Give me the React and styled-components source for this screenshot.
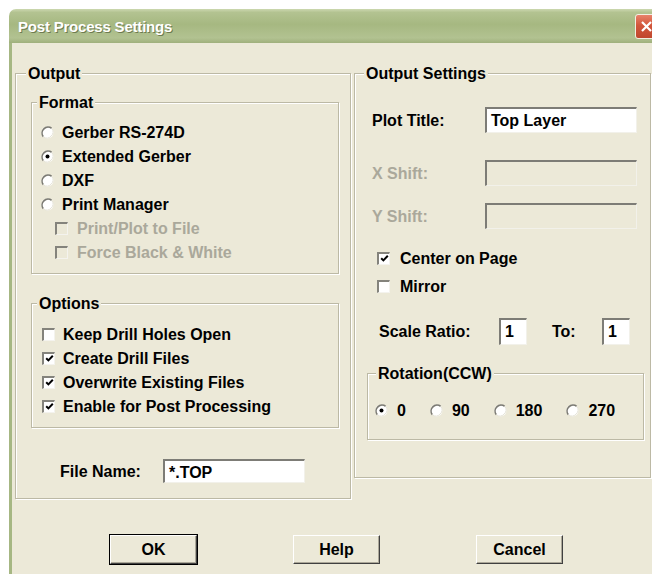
import React from 'react';
import styled, { createGlobalStyle } from 'styled-components';

const GlobalStyle = createGlobalStyle`
  html, body {
    margin: 0;
    padding: 0;
    background: #ffffff;
    overflow: hidden;
  }
  body {
    font-family: "Liberation Sans", Arial, sans-serif;
  }
`;

const Window = styled.div`
  margin: 9px 0 0 9px;
  width: 660px;
  height: calc(100vh - 9px);
  border-radius: 7px 7px 0 0;
  overflow: hidden;
  display: flex;
  flex-direction: column;
`;

const TitleBar = styled.div`
  flex: none;
  height: 34px;
  display: flex;
  align-items: center;
  justify-content: space-between;
  padding: 0 11px 0 9px;
  background: linear-gradient(
    to bottom,
    #ccd8b0 0%,
    #b3c391 10%,
    #a6b881 45%,
    #b2c291 85%,
    #9fb07c 100%
  );
`;

const Title = styled.span`
  font: bold 15px/17px "Liberation Sans", Arial, sans-serif;
  letter-spacing: -0.2px;
  color: #ffffff;
  text-shadow: 1px 1px 0 #6d7b50;
`;

const CloseButton = styled.div`
  width: 21px;
  height: 23px;
  border: 1px solid #f2efe2;
  border-radius: 3px;
  background: linear-gradient(to bottom, #e8826a, #d2563b 45%, #c0472e);
  display: flex;
  align-items: center;
  justify-content: center;
`;

const Body = styled.div`
  flex: 1;
  background: #ece9d8;
  border-left: 3px solid #a6b783;
  padding: 22px 0 0 3px;
`;

const Columns = styled.div`
  display: flex;
  align-items: flex-start;
  gap: 3px;
`;

const Group = styled.fieldset`
  margin: ${p => p.$top || 0}px 0 0 0;
  min-width: 0;
  width: ${p => (p.$w ? `${p.$w}px` : 'auto')};
  box-sizing: border-box;
  padding: ${p => p.$pad};
  border: 1px solid #bcb9a5;
  box-shadow: inset 1px 1px 0 #ffffff, 1px 1px 0 #ffffff;
`;

const Legend = styled.legend`
  margin-left: ${p => p.$indent}px;
  padding: 0 2px;
  background: #ece9d8;
  font: bold 16px/17px "Liberation Sans", Arial, sans-serif;
  color: #000;
`;

const Option = styled.div`
  display: flex;
  align-items: center;
  height: ${p => p.$h || 24}px;
  margin-top: ${p => p.$top || 0}px;
  padding-left: ${p => p.$indent || 0}px;
  gap: ${p => p.$gap}px;
  font: bold 16px/17px "Liberation Sans", Arial, sans-serif;
  color: ${p => (p.$disabled ? '#aaa89b' : '#000')};
  white-space: nowrap;
`;

const Box = styled.span`
  flex: none;
  width: 13px;
  height: 13px;
  box-sizing: border-box;
  border-style: solid;
  border-width: 2px 1px 1px 2px;
  border-color: #84837c #f4f3ee #f4f3ee #84837c;
  background: ${p => (p.$disabled ? '#ece9d8' : '#ffffff')};
  display: flex;
  align-items: center;
  justify-content: center;
`;

const FieldRow = styled.div`
  display: flex;
  align-items: center;
  margin-top: ${p => p.$top || 0}px;
  padding-left: ${p => p.$indent || 0}px;
  font: bold 16px/17px "Liberation Sans", Arial, sans-serif;
  color: ${p => (p.$disabled ? '#aaa89b' : '#000')};
`;

const FieldLabel = styled.span`
  flex: none;
  width: ${p => p.$w}px;
  margin-left: ${p => p.$left || 0}px;
  white-space: nowrap;
`;

const TextBox = styled.div`
  flex: none;
  width: ${p => p.$w}px;
  height: ${p => p.$h || 26}px;
  box-sizing: border-box;
  border-style: solid;
  border-width: 2px 1px 1px 2px;
  border-color: #7d7c76 #f2f1ea #f2f1ea #7d7c76;
  background: ${p => (p.$disabled ? '#ece9d8' : '#ffffff')};
  padding: 2px 0 0 4px;
  font: bold 16px/19px "Liberation Sans", Arial, sans-serif;
  color: #000;
  white-space: nowrap;
  overflow: hidden;
`;

const RadioRow = styled.div`
  display: flex;
  gap: 24px;
`;

const ButtonRow = styled.div`
  display: flex;
  gap: 96px;
  margin-top: 36px;
  padding-left: 95px;
`;

const Button = styled.div`
  width: 87px;
  height: 29px;
  box-sizing: border-box;
  display: flex;
  align-items: center;
  justify-content: center;
  font: bold 16px/17px "Liberation Sans", Arial, sans-serif;
  color: #000;
  background: #ece9d8;
  border-style: solid;
  border-width: 1px;
  border-color: #ffffff #404040 #404040 #ffffff;
  box-shadow: inset -1px -1px 0 #aca899;
  outline: ${p => (p.$default ? '1px solid #000' : 'none')};
`;

// classic round option button: dark upper-left rim, light lower-right rim
const Radio = ({ checked }) => (
  <svg width="13" height="13" viewBox="0 0 13 13" style={{ flex: 'none' }}>
    <circle cx="6.5" cy="6.5" r="6" fill="#ffffff" />
    <path d="M10.7 2.3 A6 6 0 0 0 2.3 10.7" fill="none" stroke="#7c7b74" strokeWidth="1.6" />
    <path d="M10.7 2.3 A6 6 0 0 1 2.3 10.7" fill="none" stroke="#e4e2d6" strokeWidth="1" />
    {checked && <circle cx="6.5" cy="6.5" r="2" fill="#000" />}
  </svg>
);

const Check = ({ checked, disabled }) => (
  <Box $disabled={disabled}>
    {checked && (
      <svg width="9" height="9" viewBox="0 0 9 9">
        <path d="M1.2 4.2 L3.4 6.4 L7.8 1.8" fill="none" stroke="#000" strokeWidth="2" />
      </svg>
    )}
  </Box>
);

const RadioOption = ({ label, checked, indent, gap = 8 }) => (
  <Option $indent={indent} $gap={gap}>
    <Radio checked={checked} />
    {label}
  </Option>
);

const CheckOption = ({ label, checked, disabled, indent, gap = 8, top, h }) => (
  <Option $indent={indent} $gap={gap} $disabled={disabled} $top={top} $h={h}>
    <Check checked={checked} disabled={disabled} />
    {label}
  </Option>
);

export default function App() {
  return (
    <>
      <GlobalStyle />
      <Window>
        <TitleBar>
          <Title>Post Process Settings</Title>
          <CloseButton>
            <svg width="13" height="13" viewBox="0 0 13 13">
              <path d="M2 2 L11 11 M11 2 L2 11" stroke="#ffffff" strokeWidth="2.2" />
            </svg>
          </CloseButton>
        </TitleBar>

        <Body>
          <Columns>
            <Group $w={336} $pad="12px 11px 15px 15px">
              <Legend $indent={-5}>Output</Legend>

              <Group $pad="9px 0 9px 9px">
                <Legend $indent={-4}>Format</Legend>
                <RadioOption label="Gerber RS-274D" />
                <RadioOption label="Extended Gerber" checked />
                <RadioOption label="DXF" />
                <RadioOption label="Print Manager" />
                <CheckOption label="Print/Plot to File" disabled indent={14} gap={9} />
                <CheckOption label="Force Black & White" disabled indent={14} gap={9} />
              </Group>

              <Group $top={21} $pad="10px 0 9px 10px">
                <Legend $indent={-5}>Options</Legend>
                <CheckOption label="Keep Drill Holes Open" />
                <CheckOption label="Create Drill Files" checked />
                <CheckOption label="Overwrite Existing Files" checked />
                <CheckOption label="Enable for Post Processing" checked />
              </Group>

              <FieldRow $top={31} $indent={29}>
                <FieldLabel $w={103}>File Name:</FieldLabel>
                <TextBox $w={142} $h={24}>*.TOP</TextBox>
              </FieldRow>
            </Group>

            <Group $w={297} $pad="0 6px 37px 12px">
              <Legend $indent={-3}>Output Settings</Legend>

              <FieldRow $top={25} $indent={5}>
                <FieldLabel $w={113}>Plot Title:</FieldLabel>
                <TextBox $w={152}>Top Layer</TextBox>
              </FieldRow>
              <FieldRow $top={27} $indent={5} $disabled>
                <FieldLabel $w={113}>X Shift:</FieldLabel>
                <TextBox $w={152} $disabled />
              </FieldRow>
              <FieldRow $top={17} $indent={5} $disabled>
                <FieldLabel $w={113}>Y Shift:</FieldLabel>
                <TextBox $w={152} $disabled />
              </FieldRow>

              <CheckOption label="Center on Page" checked indent={10} gap={10} top={19} h={20} />
              <CheckOption label="Mirror" indent={10} gap={10} top={8} h={20} />

              <FieldRow $top={22} $indent={12}>
                <FieldLabel $w={120}>Scale Ratio:</FieldLabel>
                <TextBox $w={28} $h={27}>1</TextBox>
                <FieldLabel $w={50} $left={25}>To:</FieldLabel>
                <TextBox $w={28} $h={27}>1</TextBox>
              </FieldRow>

              <Group $top={20} $pad="16px 0 17px 7px">
                <Legend $indent={1}>Rotation(CCW)</Legend>
                <RadioRow>
                  <RadioOption label="0" checked gap={9} />
                  <RadioOption label="90" gap={9} />
                  <RadioOption label="180" gap={9} />
                  <RadioOption label="270" gap={9} />
                </RadioRow>
              </Group>
            </Group>
          </Columns>

          <ButtonRow>
            <Button $default>OK</Button>
            <Button>Help</Button>
            <Button>Cancel</Button>
          </ButtonRow>
        </Body>
      </Window>
    </>
  );
}
